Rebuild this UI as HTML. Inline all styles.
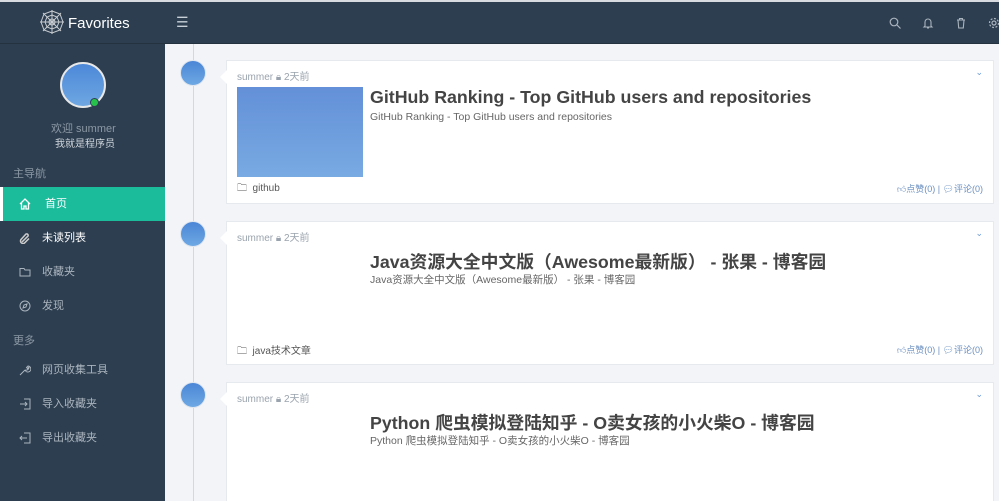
<!DOCTYPE html>
<html><head><meta charset="utf-8"><style>
*{margin:0;padding:0;box-sizing:border-box}
html{width:999px;height:501px;overflow:hidden}
body{width:999px;height:501px;overflow:hidden;background:#f3f4f8;font-family:"Liberation Sans","Noto Sans CJK SC",sans-serif;position:relative}
.top{position:absolute;left:0;top:0;width:999px;height:44px;background:#2d3e50;border-top:2px solid #d8dce0;border-bottom:1px solid #243240}
.side{position:absolute;left:0;top:44px;width:165px;height:457px;background:#2d3e50}
.logo{position:absolute;left:68px;top:13px;color:#fff;font-size:15px}
.menu{position:absolute;left:176px;top:12px;color:#c8d0d8;font-size:14px}
.ti{position:absolute;top:15px;width:12px;height:12px}
.avatar{position:absolute;left:60px;top:18px;width:46px;height:46px;border-radius:50%;border:2px solid #e8e8e8;background:linear-gradient(#4c88d8,#6fa7e2)}
.dot{position:absolute;left:90px;top:54px;width:9px;height:9px;border-radius:50%;background:#27c24c;border:1.5px solid #2d3e50}
.s{position:absolute;color:#8c98a4;font-size:11px}
.item{position:absolute;left:0;width:165px;height:34px;color:#aab4be;font-size:11px;line-height:34px;padding-left:42px}
.item svg{position:absolute;left:19px;top:11px}
.act{background:#1abc9c;color:#fff;border-left:3px solid #fff}
.line{position:absolute;left:193px;top:44px;width:1px;height:457px;background:#d4d8dd}
.circ{position:absolute;left:180px;width:26px;height:26px;border-radius:50%;background:linear-gradient(#4a86d6,#6ea8e4);border:1px solid #dfe6ee}
.card{position:absolute;left:226px;width:768px;background:#fff;border:1px solid #e6e9ee}
.card:before{content:"";position:absolute;left:-7px;top:9px;border:7px solid transparent;border-left:0;border-right-color:#fff}
.meta{position:absolute;left:10px;top:7px;font-size:10px;color:#9aa3ad}
.thumb{position:absolute;left:10px;top:26px;width:126px;height:90px;background:linear-gradient(#6390d8,#79aae2)}
.t{position:absolute;left:143px;top:26px;font-size:17.8px;font-weight:bold;color:#444;white-space:nowrap}
.d{position:absolute;left:143px;top:50px;font-size:10.5px;color:#666;white-space:nowrap}
.f{position:absolute;left:10px;top:120px;font-size:10px;color:#555}
.r{position:absolute;right:10px;top:121px;font-size:9px;color:#6a8fc0}
.chev{position:absolute;right:10px;top:6px;color:#6a9ad8;font-size:9px}
</style></head><body>
<div class="top">
<svg style="position:absolute;left:39px;top:7px" width="26" height="26" viewBox="0 0 26 26" fill="none" stroke="#c8ccd0" stroke-width="1"><polygon points="13,2 21,5 24,13 21,21 13,24 5,21 2,13 5,5"/><polygon points="13,6 18,8 20,13 18,18 13,20 8,18 6,13 8,8"/><circle cx="13" cy="13" r="3"/><path d="M13 1v24M1 13h24M4 4l18 18M22 4L4 22"/></svg>
<div class="logo">Favorites</div>
<div class="menu">☰</div>
<svg class="ti" style="left:889px" viewBox="0 0 12 12" fill="none" stroke="#aab4be" stroke-width="1.2"><circle cx="5" cy="5" r="3.8"/><path d="M8 8l3.5 3.5"/></svg>
<svg class="ti" style="left:922px" viewBox="0 0 12 12" fill="none" stroke="#aab4be" stroke-width="1.1"><path d="M3 9V5a3 3 0 0 1 6 0v4l1 1H2z M5 11h2"/></svg>
<svg class="ti" style="left:955px" viewBox="0 0 12 12" fill="none" stroke="#aab4be" stroke-width="1.1"><path d="M2 3h8M4.5 3V1.5h3V3M3 3l.7 8h4.6L9 3"/></svg>
<svg class="ti" style="left:988px" viewBox="0 0 12 12" fill="none" stroke="#aab4be" stroke-width="1.2"><circle cx="6" cy="6" r="2"/><circle cx="6" cy="6" r="4.5" stroke-dasharray="2 1.5"/></svg>
</div>
<div class="side">
<div class="avatar"></div><div class="dot"></div>
<div class="s" style="left:51px;top:76px">欢迎 summer</div>
<div class="s" style="left:55px;top:91px;color:#d0d6dc;font-size:10px">我就是程序员</div>
<div class="s" style="left:13px;top:121px">主导航</div>
<div class="item act" style="top:143px"><svg width="12" height="12" viewBox="0 0 12 12" fill="none" stroke="#fff" stroke-width="1.3" style="left:16px"><path d="M1 6l5-5 5 5M2.5 5v6h2.5V8h2v3h2.5V5"/></svg>首页</div>
<div class="item" style="top:177px;color:#fff"><svg width="12" height="12" viewBox="0 0 12 12" fill="none" stroke="#ccc" stroke-width="1.5"><path d="M3 10l6-6a1.5 1.5 0 0 0-2-2L2 7.5a2.5 2.5 0 0 0 3.5 3.5L10 6.5"/></svg>未读列表</div>
<div class="item" style="top:211px"><svg width="12" height="12" viewBox="0 0 12 12" fill="none" stroke="#aab4be"><path d="M1 2.5h4l1 1.5h5v6H1z"/></svg>收藏夹</div>
<div class="item" style="top:245px"><svg width="12" height="12" viewBox="0 0 12 12" fill="none" stroke="#aab4be"><circle cx="6" cy="6" r="5"/><path d="M8 4L5 5 4 8l3-1z"/></svg>发现</div>
<div class="s" style="left:13px;top:288px">更多</div>
<div class="item" style="top:309px"><svg width="12" height="12" viewBox="0 0 12 12" fill="none" stroke="#aab4be"><path d="M1 11l5-5M6 6a3 3 0 1 0 3-4l-1.5 1.5 1 1L10 3a3 3 0 0 1-4 3"/></svg>网页收集工具</div>
<div class="item" style="top:343px"><svg width="12" height="12" viewBox="0 0 12 12" fill="none" stroke="#aab4be"><path d="M5 1h6v10H5M1 6h7M6 4l2 2-2 2"/></svg>导入收藏夹</div>
<div class="item" style="top:377px"><svg width="12" height="12" viewBox="0 0 12 12" fill="none" stroke="#aab4be"><path d="M5 1h6v10H5M8 6H1M3 4L1 6l2 2"/></svg>导出收藏夹</div>
</div>
<div class="line"></div>
<div class="circ" style="top:60px"></div>
<div class="circ" style="top:221px"></div>
<div class="circ" style="top:382px"></div>

<div class="card" style="top:60px;height:144px"><span class="chev">⌄</span>
<div class="meta">summer 🔒︎ 2天前</div><div class="thumb"></div>
<div class="t">GitHub Ranking - Top GitHub users and repositories</div>
<div class="d">GitHub Ranking - Top GitHub users and repositories</div>
<div class="f">🗀&nbsp;&nbsp;github</div><div class="r">👍︎点赞(0) | 💬︎评论(0)</div></div>

<div class="card" style="top:221px;height:144px"><span class="chev">⌄</span>
<div class="meta">summer 🔒︎ 2天前</div>
<div class="t">Java资源大全中文版（Awesome最新版） - 张果 - 博客园</div>
<div class="d">Java资源大全中文版（Awesome最新版） - 张果 - 博客园</div>
<div class="f">🗀&nbsp;&nbsp;java技术文章</div><div class="r">👍︎点赞(0) | 💬︎评论(0)</div></div>

<div class="card" style="top:382px;height:119px;border-bottom:0"><span class="chev">⌄</span>
<div class="meta">summer 🔒︎ 2天前</div>
<div class="t">Python 爬虫模拟登陆知乎 - O卖女孩的小火柴O - 博客园</div>
<div class="d">Python 爬虫模拟登陆知乎 - O卖女孩的小火柴O - 博客园</div></div>
</body></html>
